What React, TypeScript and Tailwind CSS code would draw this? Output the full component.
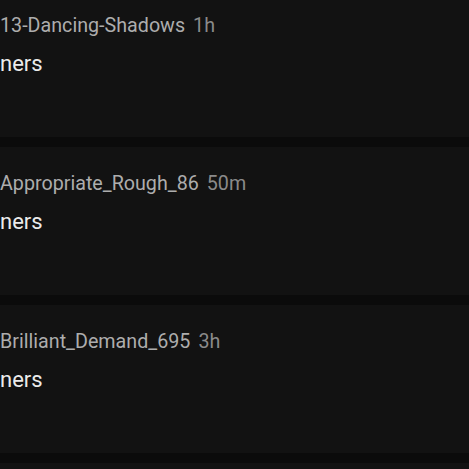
const comments = [
  { user: '13-Dancing-Shadows', time: '1h', body: 'ners' },
  { user: 'Appropriate_Rough_86', time: '50m', body: 'ners' },
  { user: 'Brilliant_Demand_695', time: '3h', body: 'ners' },
];

export default function App() {
  return (
    <div
      className="w-[469px] h-[469px] overflow-hidden bg-[#0b0b0b]"
      style={{ fontFamily: 'Roboto, "Liberation Sans", sans-serif' }}
    >
      <div className="flex flex-col gap-[10px] -mt-[11px]">
        {comments.map((c) => (
          <div key={c.user} className="h-[148px] bg-[#121212] pt-[24px]">
            <div className="flex items-baseline gap-[8px] text-[19.7px] leading-[26px]">
              <span className="text-[#adadad]">{c.user}</span>
              <span className="text-[#8a8a8a]">{c.time}</span>
            </div>
            <p className="mt-[11px] text-[22px] leading-[28px] text-[#ebebeb]">{c.body}</p>
          </div>
        ))}
        <div className="h-[148px] bg-[#121212]" />
      </div>
    </div>
  );
}
